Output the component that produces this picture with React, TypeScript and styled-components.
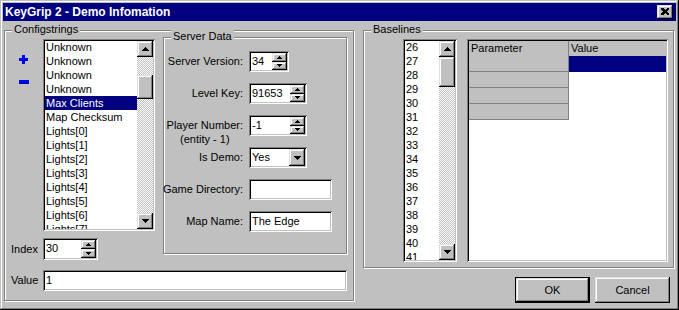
import * as React from 'react';
import styled, { createGlobalStyle, css } from 'styled-components';

const configItems = [
  'Unknown',
  'Unknown',
  'Unknown',
  'Unknown',
  'Max Clients',
  'Map Checksum',
  'Lights[0]',
  'Lights[1]',
  'Lights[2]',
  'Lights[3]',
  'Lights[4]',
  'Lights[5]',
  'Lights[6]',
  'Lights[7]',
];

const baselineItems = Array.from({ length: 16 }, (_, i) => String(26 + i));

const Arrow = ({ dir, w }: { dir: 'up' | 'down'; w: number }) => {
  const h = Math.ceil(w / 2);
  const pts =
    dir === 'up' ? `0,${h} ${w},${h} ${w / 2},0` : `0,0 ${w},0 ${w / 2},${h}`;
  return (
    <svg width={w} height={h} viewBox={`0 0 ${w} ${h}`} shapeRendering="crispEdges">
      <polygon points={pts} fill="#000" />
    </svg>
  );
};

const ListBox = (props: {
  items: string[];
  selected?: number;
  width: number;
  height: number;
  thumbTop: number;
  thumbSize: number;
}) => {
  return (
    <ListFrame $w={props.width} $h={props.height}>
      <ListViewport>
        <ListTrack>
          {props.items.map((item, i) => (
            <ListItem key={i} $selected={i === props.selected}>
              {item}
            </ListItem>
          ))}
        </ListTrack>
      </ListViewport>
      <ScrollBar>
        <ScrollButton>
          <Arrow dir="up" w={7} />
        </ScrollButton>
        <ScrollTrack>
          <ScrollThumb $offset={props.thumbTop} $size={props.thumbSize} />
        </ScrollTrack>
        <ScrollButton>
          <Arrow dir="down" w={7} />
        </ScrollButton>
      </ScrollBar>
    </ListFrame>
  );
};

const Spin = (props: { value: string; width: number; height?: number }) => {
  return (
    <SpinFrame $w={props.width} $h={props.height || 21}>
      <FieldText>{props.value}</FieldText>
      <SpinButtons>
        <SpinButton>
          <Arrow dir="up" w={5} />
        </SpinButton>
        <SpinButton>
          <Arrow dir="down" w={5} />
        </SpinButton>
      </SpinButtons>
    </SpinFrame>
  );
};

export default function App() {
  return (
    <>
      <GlobalStyle />
      <Window>
        <TitleBar>
          <span>KeyGrip 2 - Demo Infomation</span>
          <CloseButton>
            <svg width="8" height="7" viewBox="0 0 8 7" shapeRendering="crispEdges">
              <path d="M0 0h2l2 2l2-2h2v1l-2 2.5l2 2.5v1h-2l-2-2l-2 2h-2v-1l2-2.5l-2-2.5z" fill="#000" />
            </svg>
          </CloseButton>
        </TitleBar>
        <Body>
          <Group $w={350} $h={271}>
            <Legend>Configstrings</Legend>
            <ConfigGrid>
              <IconColumn>
                <svg width="9" height="9" viewBox="0 0 9 9" shapeRendering="crispEdges">
                  <path d="M3 0h3v3h3v3h-3v3h-3v-3h-3v-3h3z" fill="#0000ff" />
                  <path d="M6 3h3v3h-3zM3 6h3v3h-3z" fill="#0000b0" opacity="0.6" />
                </svg>
                <svg width="10" height="4" viewBox="0 0 10 4" shapeRendering="crispEdges">
                  <rect x="0" y="0" width="10" height="3" fill="#0000ff" />
                  <rect x="0" y="3" width="10" height="1" fill="#000080" />
                </svg>
              </IconColumn>
              <ListCell>
                <ListBox
                  items={configItems}
                  selected={4}
                  width={112}
                  height={192}
                  thumbTop={18}
                  thumbSize={24}
                />
              </ListCell>
              <ServerCell>
                <Group $w={184} $h={217}>
                  <Legend>Server Data</Legend>
                  <ServerFields>
                    <FieldLabel>Server Version:</FieldLabel>
                    <Spin value="34" width={40} />
                    <FieldLabel>Level Key:</FieldLabel>
                    <Spin value="91653" width={58} />
                    <FieldLabel>
                      <TwoLineLabel>
                        <span>Player Number:</span>
                        <SubLine>(entity - 1)</SubLine>
                      </TwoLineLabel>
                    </FieldLabel>
                    <Spin value="-1" width={58} />
                    <FieldLabel>Is Demo:</FieldLabel>
                    <Combo>
                      <FieldText>Yes</FieldText>
                      <DropButton>
                        <Arrow dir="down" w={7} />
                      </DropButton>
                    </Combo>
                    <FieldLabel>Game Directory:</FieldLabel>
                    <TextField $w={83}></TextField>
                    <FieldLabel>Map Name:</FieldLabel>
                    <TextField $w={83}>The Edge</TextField>
                  </ServerFields>
                </Group>
              </ServerCell>
              <RowLabel $row={2}>Index</RowLabel>
              <IndexCell>
                <Spin value="30" width={55} height={22} />
              </IndexCell>
              <RowLabel $row={3}>Value</RowLabel>
              <ValueCell>
                <TextField $w={304}>1</TextField>
              </ValueCell>
            </ConfigGrid>
          </Group>
          <RightColumn>
            <Group $w={311} $h={238}>
              <Legend>Baselines</Legend>
              <BaselineRow>
                <ListBox
                  items={baselineItems}
                  width={54}
                  height={223}
                  thumbTop={0}
                  thumbSize={30}
                />
                <DataGrid>
                  <GridHead $first>Parameter</GridHead>
                  <GridHead>Value</GridHead>
                  {[0, 1, 2, 3].map((r) => (
                    <React.Fragment key={r}>
                      <RowHead />
                      <GridCell $selected={r === 0} />
                    </React.Fragment>
                  ))}
                </DataGrid>
              </BaselineRow>
            </Group>
            <ButtonRow>
              <DialogButton $default>OK</DialogButton>
              <DialogButton>Cancel</DialogButton>
            </ButtonRow>
          </RightColumn>
        </Body>
      </Window>
    </>
  );
}

const GlobalStyle = createGlobalStyle`
  html, body {
    margin: 0;
    padding: 0;
    background: #c0c0c0;
  }
  body {
    font-family: "Liberation Sans", Arial, sans-serif;
    font-size: 11px;
    color: #000;
  }
`;

const raised = css`
  background: #c0c0c0;
  box-shadow: inset -1px -1px #000, inset 1px 1px #dfdfdf, inset -2px -2px #808080,
    inset 2px 2px #fff;
`;

const sunken = css`
  background: #fff;
  box-shadow: inset 1px 1px #808080, inset -1px -1px #fff, inset 2px 2px #000,
    inset -2px -2px #c0c0c0;
`;

const Window = styled.div`
  width: 679px;
  height: 310px;
  box-sizing: border-box;
  padding: 3px;
  background: #c0c0c0;
  box-shadow: inset -1px -1px #000, inset 1px 1px #c0c0c0, inset -2px -2px #808080,
    inset 2px 2px #fff;
  display: flex;
  flex-direction: column;
`;

const TitleBar = styled.div`
  height: 18px;
  flex-shrink: 0;
  background: #000080;
  color: #fff;
  display: flex;
  align-items: center;
  justify-content: space-between;
  padding: 0 3px 0 2px;
  font-weight: bold;
  font-size: 12px;
`;

const CloseButton = styled.div`
  ${raised};
  width: 16px;
  height: 14px;
  display: flex;
  align-items: center;
  justify-content: center;
  box-sizing: border-box;
  padding-bottom: 1px;
`;

const Body = styled.div`
  display: flex;
  align-items: flex-start;
  gap: 9px;
  padding: 9px 0 0 1px;
`;

const Group = styled.div<{ $w: number; $h: number }>`
  position: relative;
  box-sizing: border-box;
  width: ${(p) => p.$w}px;
  height: ${(p) => p.$h}px;
  border: 1px solid #808080;
  box-shadow: 1px 1px 0 #fff, inset 1px 1px 0 #fff;
`;

const Legend = styled.div`
  position: absolute;
  top: -8px;
  left: 7px;
  padding: 0 2px;
  line-height: 13px;
  background: #c0c0c0;
  white-space: nowrap;
`;

const ConfigGrid = styled.div`
  display: grid;
  grid-template-columns: 32px 112px 8px 185px;
  grid-template-rows: 194px 29px 31px;
  padding: 6px 0 0 6px;
`;

const IconColumn = styled.div`
  grid-area: 1 / 1;
  display: flex;
  flex-direction: column;
  align-items: flex-start;
  padding: 18px 0 0 8px;
  gap: 16px;
`;

const ListCell = styled.div`
  grid-area: 1 / 2;
  padding-top: 2px;
`;

const ServerCell = styled.div`
  grid-column: 4;
  grid-row: 1 / span 2;
`;

const IndexCell = styled.div`
  grid-area: 2 / 2;
  align-self: end;
`;

const ValueCell = styled.div`
  grid-row: 3;
  grid-column: 2 / 5;
  align-self: end;
`;

const RowLabel = styled.div<{ $row: number }>`
  grid-row: ${(p) => p.$row};
  grid-column: 1;
  align-self: end;
  height: ${(p) => (p.$row === 2 ? 22 : 21)}px;
  line-height: ${(p) => (p.$row === 2 ? 22 : 21)}px;
`;

const ListFrame = styled.div<{ $w: number; $h: number }>`
  ${sunken};
  width: ${(p) => p.$w}px;
  height: ${(p) => p.$h}px;
  box-sizing: border-box;
  padding: 2px;
  display: flex;
`;

const ListViewport = styled.div`
  flex: 1;
  overflow: hidden;
`;

const ListTrack = styled.div`
  margin-top: -1px;
`;

const ListItem = styled.div<{ $selected?: boolean }>`
  height: 14px;
  line-height: 14px;
  padding-left: 1px;
  white-space: nowrap;
  background: ${(p) => (p.$selected ? '#000080' : 'transparent')};
  color: ${(p) => (p.$selected ? '#fff' : '#000')};
`;

const ScrollBar = styled.div`
  width: 16px;
  flex-shrink: 0;
  display: flex;
  flex-direction: column;
`;

const ScrollButton = styled.div`
  ${raised};
  height: 16px;
  flex-shrink: 0;
  display: flex;
  align-items: center;
  justify-content: center;
`;

const ScrollTrack = styled.div`
  flex: 1;
  background: repeating-conic-gradient(#c0c0c0 0% 25%, #fff 0% 50%) 0 0 / 2px 2px;
`;

const ScrollThumb = styled.div<{ $offset: number; $size: number }>`
  ${raised};
  margin-top: ${(p) => p.$offset}px;
  height: ${(p) => p.$size}px;
`;

const ServerFields = styled.div`
  display: grid;
  grid-template-columns: 79px auto;
  grid-auto-rows: 21px;
  column-gap: 6px;
  row-gap: 11px;
  padding-top: 13px;
  justify-items: start;
`;

const FieldLabel = styled.div`
  justify-self: end;
  height: 21px;
  line-height: 21px;
  white-space: nowrap;
`;

const TwoLineLabel = styled.span`
  display: inline-flex;
  flex-direction: column;
  align-items: center;
`;

const SubLine = styled.span`
  line-height: 12px;
  margin-top: -3px;
`;

const SpinFrame = styled.div<{ $w: number; $h: number }>`
  ${sunken};
  width: ${(p) => p.$w}px;
  height: ${(p) => p.$h}px;
  box-sizing: border-box;
  padding: 2px;
  display: flex;
`;

const FieldText = styled.div`
  flex: 1;
  padding-left: 1px;
  line-height: 17px;
  white-space: nowrap;
  overflow: hidden;
`;

const SpinButtons = styled.div`
  width: 15px;
  display: flex;
  flex-direction: column;
`;

const SpinButton = styled.div`
  ${raised};
  flex: 1;
  display: flex;
  align-items: center;
  justify-content: center;
`;

const Combo = styled.div`
  ${sunken};
  width: 58px;
  height: 21px;
  box-sizing: border-box;
  padding: 2px;
  display: flex;
`;

const DropButton = styled.div`
  ${raised};
  width: 16px;
  display: flex;
  align-items: center;
  justify-content: center;
`;

const TextField = styled.div<{ $w: number }>`
  ${sunken};
  width: ${(p) => p.$w}px;
  height: 21px;
  box-sizing: border-box;
  padding: 2px 2px 2px 3px;
  line-height: 17px;
  white-space: nowrap;
`;

const RightColumn = styled.div`
  width: 311px;
  display: flex;
  flex-direction: column;
`;

const BaselineRow = styled.div`
  display: flex;
  gap: 10px;
  padding: 8px 0 0 39px;
`;

const DataGrid = styled.div`
  ${sunken};
  width: 201px;
  height: 223px;
  box-sizing: border-box;
  padding: 2px;
  display: grid;
  grid-template-columns: 100px 97px;
  grid-template-rows: 15px repeat(4, 16px);
  align-content: start;
`;

const GridHead = styled.div<{ $first?: boolean }>`
  background: #c0c0c0;
  border-right: ${(p) => (p.$first ? '1px solid #808080' : 'none')};
  padding-left: 2px;
  line-height: 15px;
`;

const RowHead = styled.div`
  background: #c0c0c0;
  border-right: 1px solid #808080;
  border-bottom: 1px solid #808080;
`;

const GridCell = styled.div<{ $selected?: boolean }>`
  background: ${(p) => (p.$selected ? '#000080' : '#fff')};
`;

const ButtonRow = styled.div`
  display: flex;
  justify-content: flex-end;
  gap: 5px;
  padding-right: 4px;
  margin-top: 9px;
`;

const DialogButton = styled.div<{ $default?: boolean }>`
  ${raised};
  width: 75px;
  height: 26px;
  box-sizing: border-box;
  display: flex;
  align-items: center;
  justify-content: center;
  ${(p) =>
    p.$default &&
    css`
      border: 1px solid #000;
    `}
`;
